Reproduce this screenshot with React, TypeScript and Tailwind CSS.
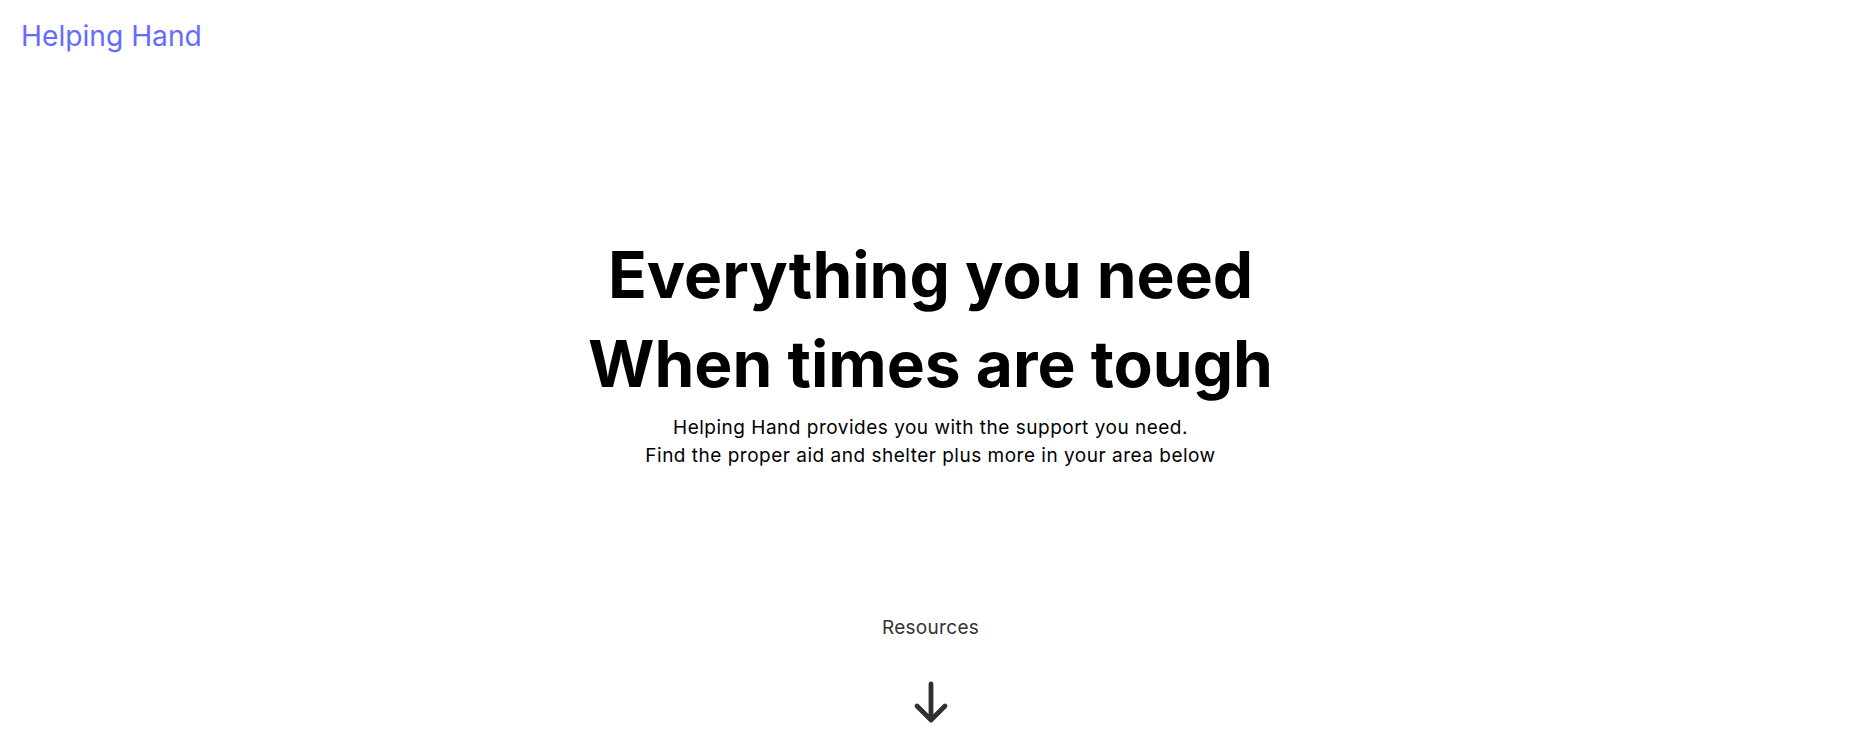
import { ReactNode } from "react";

interface HeaderProps {
    /**
     * Brand text shown at the left
     */
    title?: string;
}

function Header({ title = "Helping Hand" }: HeaderProps) {
    return (
        <header className="pl-[21px] pt-[18px]">
            <a href="#" className="text-[28.2px] leading-[36px] text-[#646cff]">
                {title}
            </a>
        </header>
    );
}

function ArrowDown({ className = "" }: { className?: string }) {
    return (
        <svg
            viewBox="0 0 24 24"
            fill="none"
            stroke="currentColor"
            strokeWidth={2.4}
            strokeLinecap="round"
            strokeLinejoin="round"
            className={className}
        >
            <path d="M19 14l-7 7m0 0l-7-7m7 7V3" />
        </svg>
    );
}

function Hero({ children }: { children?: ReactNode }) {
    return (
        <section className="flex flex-col items-center text-center mt-[176px] pl-[5px]">
            <h1 className="text-[64px] leading-[89px] font-bold text-black">
                Everything you need
                <br />
                When times are tough
            </h1>
            <p className="mt-[6px] text-[19px] leading-7 tracking-[0.5px] text-black">
                Helping Hand provides you with the support you need.
                <br />
                Find the proper aid and shelter plus more in your area below
            </p>
            {children}
        </section>
    );
}

export default function App() {
    return (
        <div
            className="min-h-screen bg-white"
            style={{ fontFamily: "Inter, 'Noto Sans', sans-serif" }}
        >
            <Header />
            <Hero>
                {/* Scroll hint */}
                <div className="mt-[144px] flex flex-col items-center">
                    <span className="text-[19px] leading-7 tracking-[0.3px] text-[#333]">Resources</span>
                    <ArrowDown className="mt-[36px] w-12 h-12 text-[#303030]" />
                </div>
            </Hero>
        </div>
    );
}
